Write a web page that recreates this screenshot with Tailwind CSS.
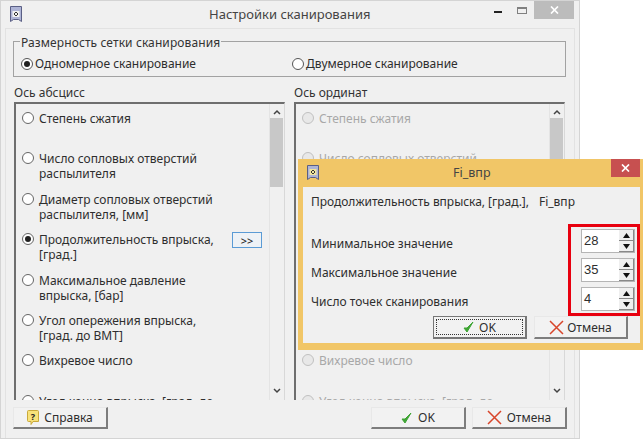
<!DOCTYPE html>
<html lang="en">
<head>
    <meta charset="UTF-8">
    <title>Настройки сканирования</title>
    <script src="https://cdn.jsdelivr.net/npm/@tailwindcss/browser@4"></script>
</head>
<body class="bg-white">
<div class="relative w-[643px] h-[441px] overflow-hidden bg-white font-['Noto_Sans','DejaVu_Sans',sans-serif] text-[12px] leading-[15px] text-[#2e2e2e]">

    <!-- main window -->
    <div class="w-[580px] h-[439px] bg-[#f0f0f0] border border-[#d4d4d4] flex flex-col">
        <div class="h-[27px] shrink-0 flex items-start relative">
            <svg class="ml-[9px] mt-[5px]" width="12" height="16" viewBox="0 0 12 16">
                <path d="M.5.5h11v15l-3-2h-5l-3 2z" fill="#aeb4d6" stroke="#5a5f85"/>
                <rect x="2.5" y="5" width="7" height="6" fill="#f1f1f1"/>
                <path d="M6 6l2 2-2 2-2-2z" fill="none" stroke="#333"/>
            </svg>
            <div class="absolute left-[208px] top-[4px] text-[13px] leading-[18px] text-[#444]">Настройки сканирования</div>
            <div class="ml-auto flex items-start h-[18px] mr-[5px]">
                <div class="w-[8px] h-[2px] bg-[#222] mt-[10px] mr-[15px]"></div>
                <div class="w-[10px] h-[7px] border border-[#808080] border-t-2 mt-[6px] mr-[7px]"></div>
                <div class="w-[40px] h-[18px] bg-[#bcbcbc] flex items-center justify-center">
                    <svg width="9" height="8" viewBox="0 0 9 8"><path d="M1 .5l7 7M8 .5l-7 7" stroke="#fff" stroke-width="1.7"/></svg>
                </div>
            </div>
        </div>

        <div class="mx-[4px] flex-1 bg-[#f0f0f0] border-t border-x border-[#e2e2e2] pt-[12px] px-[7px] flex flex-col">
            <!-- group box -->
            <div class="relative h-[36px] mr-px border border-[#a2a2a2] flex items-end pb-[5px]">
                <div class="absolute left-[6px] top-[-7px] bg-[#f0f0f0] px-px tracking-[0.1px] text-[#333]">Размерность сетки сканирования</div>
                <label class="flex items-center ml-[7px] gap-[2px] w-[271px]">
                    <span class="w-[12px] h-[12px] rounded-full border border-[#555] bg-white flex items-center justify-center"><span class="w-[6px] h-[6px] rounded-full bg-[#222]"></span></span>
                    Одномерное сканирование
                </label>
                <label class="flex items-center gap-[2px]">
                    <span class="w-[12px] h-[12px] rounded-full border border-[#555] bg-white"></span>
                    Двумерное сканирование
                </label>
            </div>

            <div class="flex gap-[9px] mt-[8px] ml-px">
                <!-- left list -->
                <div class="w-[271px]">
                    <div class="h-[17px] text-[#333]">Ось абсцисс</div>
                    <div class="relative h-[298px] border-l-2 border-t-2 border-[#6e6e6e] border-r border-r-[#d8d8d8] overflow-hidden flex">
                        <div class="flex-1 pl-[6px] pt-[7px] relative">
                            <div class="h-[40.4px] flex gap-[5px]"><span class="w-[12px] h-[12px] mt-[1px] shrink-0 rounded-full border border-[#666] bg-white"></span><span>Степень сжатия</span></div>
                            <div class="h-[40.4px] flex gap-[5px]"><span class="w-[12px] h-[12px] mt-[1px] shrink-0 rounded-full border border-[#666] bg-white"></span><span>Число сопловых отверстий<br>распылителя</span></div>
                            <div class="h-[40.4px] flex gap-[5px]"><span class="w-[12px] h-[12px] mt-[1px] shrink-0 rounded-full border border-[#666] bg-white"></span><span>Диаметр сопловых отверстий<br>распылителя, [мм]</span></div>
                            <div class="h-[40.4px] flex gap-[5px]"><span class="w-[12px] h-[12px] mt-[1px] shrink-0 rounded-full border border-[#666] bg-white flex items-center justify-center"><span class="w-[6px] h-[6px] rounded-full bg-[#222]"></span></span><span>Продолжительность впрыска,<br>[град.]</span></div>
                            <div class="h-[40.4px] flex gap-[5px]"><span class="w-[12px] h-[12px] mt-[1px] shrink-0 rounded-full border border-[#666] bg-white"></span><span>Максимальное давление<br>впрыска, [бар]</span></div>
                            <div class="h-[40.4px] flex gap-[5px]"><span class="w-[12px] h-[12px] mt-[1px] shrink-0 rounded-full border border-[#666] bg-white"></span><span>Угол опережения впрыска,<br>[град. до ВМТ]</span></div>
                            <div class="h-[40.4px] flex gap-[5px]"><span class="w-[12px] h-[12px] mt-[1px] shrink-0 rounded-full border border-[#666] bg-white"></span><span>Вихревое число</span></div>
                            <div class="h-[40.4px] flex gap-[5px]"><span class="w-[12px] h-[12px] mt-[1px] shrink-0 rounded-full border border-[#666] bg-white"></span><span>Угол конца впрыска, [град. до</span></div>
                            <button class="absolute left-[216px] top-[128px] w-[30px] h-[16px] border border-[#5b9bd5] bg-[#eef2f6] text-[11px] leading-[13px] font-medium text-[#222]">&gt;&gt;</button>
                        </div>
                        <div class="w-[14px] shrink-0 flex flex-col items-center border-l border-[#e4e4e4] mr-px">
                            <svg class="mt-[5px]" width="8" height="6" viewBox="0 0 8 6"><path d="M1 5l3-3 3 3" fill="none" stroke="#444" stroke-width="1.5"/></svg>
                            <div class="w-[13px] h-[69px] bg-[#c8c8c8] mt-[3px]"></div>
                            <svg class="mt-auto mb-[6px]" width="8" height="6" viewBox="0 0 8 6"><path d="M1 1l3 3 3-3" fill="none" stroke="#444" stroke-width="1.5"/></svg>
                        </div>
                    </div>
                </div>
                <!-- right list -->
                <div class="w-[271px]">
                    <div class="h-[17px] text-[#333]">Ось ординат</div>
                    <div class="relative h-[298px] border-l-2 border-t-2 border-[#6e6e6e] border-r border-r-[#d8d8d8] overflow-hidden flex text-[#a8a8a8]">
                        <div class="flex-1 pl-[6px] pt-[7px]">
                            <div class="h-[40.4px] flex gap-[5px]"><span class="w-[12px] h-[12px] mt-[1px] shrink-0 rounded-full border border-[#c0c0c0] bg-[#e8e8e8]"></span><span>Степень сжатия</span></div>
                            <div class="h-[40.4px] flex gap-[5px]"><span class="w-[12px] h-[12px] mt-[1px] shrink-0 rounded-full border border-[#c0c0c0] bg-[#e8e8e8]"></span><span>Число сопловых отверстий</span></div>
                            <div class="h-[161.6px]"></div>
                            <div class="h-[40.4px] flex gap-[5px]"><span class="w-[12px] h-[12px] mt-[1px] shrink-0 rounded-full border border-[#c0c0c0] bg-[#e8e8e8]"></span><span>Вихревое число</span></div>
                            <div class="h-[40.4px] flex gap-[5px]"><span class="w-[12px] h-[12px] mt-[1px] shrink-0 rounded-full border border-[#c0c0c0] bg-[#e8e8e8]"></span><span>Угол конца впрыска, [град. до</span></div>
                        </div>
                        <div class="w-[14px] shrink-0 flex flex-col items-center border-l border-[#e4e4e4] mr-px">
                            <svg class="mt-[5px]" width="8" height="6" viewBox="0 0 8 6"><path d="M1 5l3-3 3 3" fill="none" stroke="#444" stroke-width="1.5"/></svg>
                            <div class="w-[13px] h-[69px] bg-[#c8c8c8] mt-[3px]"></div>
                            <svg class="mt-auto mb-[6px]" width="8" height="6" viewBox="0 0 8 6"><path d="M1 1l3 3 3-3" fill="none" stroke="#444" stroke-width="1.5"/></svg>
                        </div>
                    </div>
                </div>
            </div>

            <!-- bottom buttons -->
            <div class="flex mt-[7px]">
                <button class="w-[95px] h-[22px] bg-[#f2f2f2] border border-[#e8e8e8] border-r-2 border-b-2 border-r-[#7d7d7d] border-b-[#7d7d7d] flex items-center justify-center gap-[5px]">
                    <svg width="12" height="15" viewBox="0 0 12 15"><path d="M1.5.5h9a1 1 0 0 1 1 1v10H6l-2 3v-3H1.500a1 1 0 0 1-1-1v-9a1 1 0 0 1 1-1z" fill="#f8e27a" stroke="#c9a93a"/><text x="6" y="9.500" font-size="9" font-weight="700" text-anchor="middle" fill="#222">?</text></svg>
                    Справка
                </button>
                <button class="ml-auto w-[95px] h-[22px] bg-[#f2f2f2] border border-[#e8e8e8] border-r-2 border-b-2 border-r-[#7d7d7d] border-b-[#7d7d7d] flex items-center justify-center gap-[6px]">
                    <svg width="11" height="12" viewBox="0 0 11 12"><path d="M1 7l3 4 6-10-6 6z" fill="#3fa535" stroke="#3fa535"/></svg>
                    OK
                </button>
                <button class="ml-[6px] w-[95px] h-[22px] bg-[#f2f2f2] border border-[#e8e8e8] border-r-2 border-b-2 border-r-[#7d7d7d] border-b-[#7d7d7d] flex items-center justify-center gap-[5px]">
                    <svg width="15" height="15" viewBox="0 0 15 15"><path d="M1 1l13 13M14 1L1 14" stroke="#d8452a" stroke-width="1.500"/></svg>
                    Отмена
                </button>
            </div>
        </div>
    </div>

    <!-- Fi_впр dialog, sits over the main window -->
    <div class="absolute left-[298px] top-[159px] w-[345px] h-[191px] bg-[#f1c667] flex flex-col">
        <div class="h-[28px] relative shrink-0">
            <svg class="ml-[9px] mt-[6px]" width="12" height="15" viewBox="0 0 12 15">
                <path d="M.5.5h11v14l-3-2h-5l-3 2z" fill="#aeb4d6" stroke="#5a5f85"/>
                <rect x="2.500" y="4" width="7" height="6" fill="#f1e5a0"/>
                <path d="M6 5l2 2-2 2-2-2z" fill="none" stroke="#333"/>
            </svg>
            <div class="absolute left-[155px] top-[5px] text-[12.5px] leading-[18px] text-[#444]">Fi_впр</div>
            <div class="absolute right-[3px] top-0 w-[29px] h-[18px] bg-[#c75050] flex items-center justify-center">
                <svg width="9" height="8" viewBox="0 0 9 8"><path d="M1 .5l7 7M8 .5l-7 7" stroke="#fff" stroke-width="1.700"/></svg>
            </div>
        </div>
        <div class="flex-1 ml-[5px] mr-[3px] mb-[7px] bg-[#f0f0f0] pl-[8px] pr-[5px] pt-[7px] flex flex-col">
            <div class="h-[15px] flex gap-[10px]"><span class="tracking-[-0.03px]">Продолжительность впрыска, [град.],</span><span>Fi_впр</span></div>
            <div class="mt-[20px] flex flex-col">
                <div class="flex items-start justify-between h-[29px]">
                    <span class="pt-[7px]">Минимальное значение</span>
                    <div class="w-[54px] h-[24px] bg-white border border-[#b5b5b5] flex pl-[2px]"><span class="flex-1 pt-[3px] font-['Liberation_Sans',sans-serif] text-[13px]">28</span>
                        <div class="w-[15px] flex flex-col">
                            <div class="h-[11px] bg-[#efefef] border-r border-b border-[#888] flex items-center justify-center"><svg width="7" height="5" viewBox="0 0 7 5"><path d="M3.500 0L7 5H0z" fill="#111"/></svg></div>
                            <div class="h-[11px] bg-[#efefef] border-r border-b border-[#888] flex items-center justify-center"><svg width="7" height="5" viewBox="0 0 7 5"><path d="M3.500 5L7 0H0z" fill="#111"/></svg></div>
                        </div>
                    </div>
                </div>
                <div class="flex items-start justify-between h-[29px]">
                    <span class="pt-[7px]">Максимальное значение</span>
                    <div class="w-[54px] h-[24px] bg-white border border-[#b5b5b5] flex pl-[2px]"><span class="flex-1 pt-[3px] font-['Liberation_Sans',sans-serif] text-[13px]">35</span>
                        <div class="w-[15px] flex flex-col">
                            <div class="h-[11px] bg-[#efefef] border-r border-b border-[#888] flex items-center justify-center"><svg width="7" height="5" viewBox="0 0 7 5"><path d="M3.500 0L7 5H0z" fill="#111"/></svg></div>
                            <div class="h-[11px] bg-[#efefef] border-r border-b border-[#888] flex items-center justify-center"><svg width="7" height="5" viewBox="0 0 7 5"><path d="M3.500 5L7 0H0z" fill="#111"/></svg></div>
                        </div>
                    </div>
                </div>
                <div class="flex items-start justify-between h-[29px]">
                    <span class="pt-[7px]">Число точек сканирования</span>
                    <div class="w-[54px] h-[24px] bg-white border border-[#b5b5b5] flex pl-[2px]"><span class="flex-1 pt-[3px] font-['Liberation_Sans',sans-serif] text-[13px]">4</span>
                        <div class="w-[15px] flex flex-col">
                            <div class="h-[11px] bg-[#efefef] border-r border-b border-[#888] flex items-center justify-center"><svg width="7" height="5" viewBox="0 0 7 5"><path d="M3.500 0L7 5H0z" fill="#111"/></svg></div>
                            <div class="h-[11px] bg-[#efefef] border-r border-b border-[#888] flex items-center justify-center"><svg width="7" height="5" viewBox="0 0 7 5"><path d="M3.500 5L7 0H0z" fill="#111"/></svg></div>
                        </div>
                    </div>
                </div>
            </div>
            <div class="flex justify-end gap-[7px] mr-[7px]">
                <button class="w-[94px] h-[23px] bg-[#f2f2f2] border border-[#777] border-r-2 border-b-2 flex items-center justify-center gap-[5px] relative">
                    <span class="absolute inset-[2px] border border-dotted border-[#333]"></span>
                    <svg width="11" height="12" viewBox="0 0 11 12"><path d="M1 7l3 4 6-10-6 6z" fill="#3fa535" stroke="#3fa535"/></svg>
                    OK
                </button>
                <button class="w-[94px] h-[23px] bg-[#f2f2f2] border border-[#e8e8e8] border-r-2 border-b-2 border-r-[#7d7d7d] border-b-[#7d7d7d] flex items-center justify-center gap-[3px]">
                    <svg width="15" height="15" viewBox="0 0 15 15"><path d="M1 1l13 13M14 1L1 14" stroke="#d8452a" stroke-width="1.500"/></svg>
                    Отмена
                </button>
            </div>
        </div>
    </div>

    <!-- red highlight drawn over the spin boxes -->
    <div class="absolute left-[568px] top-[224px] w-[72px] h-[92px] border-[3px] border-[#e8000f]"></div>
</div>
</body>
</html>
